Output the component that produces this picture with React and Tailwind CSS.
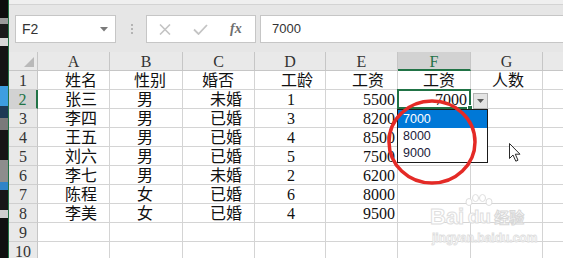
import React from "react";

const colW = ["w-[72px]", "w-[73px]", "w-[72px]", "w-[71px]", "w-[72px]", "w-[73px]", "w-[72px]"];
const letters = ["A", "B", "C", "D", "E", "F", "G"];
const headPad = ["pl-[27px]", "pl-[24px]", "pl-[19px]", "pl-[26px]", "pl-[26px]", "pl-[25px]", "pl-[21px]"];
const dataPad = ["pl-[27px]", "pl-[27px]", "text-right pr-[12px]", "pl-[32px]", "text-right pr-[2px]", "text-right pr-[3px]", ""];

const data = [
  ["张三", "男", "未婚", "1", "5500", "7000", ""],
  ["李四", "男", "已婚", "3", "8200", "", ""],
  ["王五", "男", "已婚", "4", "8500", "", ""],
  ["刘六", "男", "已婚", "5", "7500", "", ""],
  ["李七", "男", "未婚", "2", "6200", "", ""],
  ["陈程", "女", "已婚", "6", "8000", "", ""],
  ["李美", "女", "已婚", "4", "9500", "", ""],
  ["", "", "", "", "", "", ""],
  ["", "", "", "", "", "", ""],
];

const cellFont = "font-['Liberation_Serif','Noto_Sans_CJK_SC',serif] text-[16px] leading-[16px] text-[#111]";

function RowHeader({ n, active }) {
  return (
    <div
      className={
        "w-[29px] h-[19px] shrink-0 pt-[2px] text-center border-b border-[#cfcfcf] " +
        (active
          ? "bg-[#d2d2d2] text-[#217346] border-r-2 border-r-[#217346]"
          : "bg-[#e9e9e9] text-[#333] border-r border-r-[#c6c6c6]")
      }
    >
      {n}
    </div>
  );
}

function DataRow({ n, cells, pads }) {
  return (
    <div className={"flex h-[19px] " + cellFont}>
      <RowHeader n={n} active={n === 2} />
      {cells.map((c, i) => (
        <div
          key={i}
          className={colW[i] + " h-[19px] shrink-0 pt-[2px] border-r border-b border-[#d4d4d4] whitespace-nowrap overflow-hidden " + pads[i]}
        >
          {c}
        </div>
      ))}
      <div className="flex-1 h-[19px] border-b border-[#d4d4d4]" />
    </div>
  );
}

function LeftStrip() {
  return (
    <div className="w-[8px] h-full shrink-0 bg-[#111] flex flex-col">
      <div className="h-[18px] bg-[#0d0d0d]" />
      <div className="h-[6px] bg-[#9a9a9a]" />
      <div className="h-[14px] bg-[#1b1b1b]" />
      <div className="h-[8px] bg-[#d8d8d8]" />
      <div className="h-[40px] bg-[#141414]" />
      <div className="h-[20px] bg-[#3d9ee0]" />
      <div className="h-[12px] bg-[#1d3a55]" />
      <div className="h-[12px] bg-[#7a7a7a]" />
      <div className="h-[30px] bg-[#161616]" />
      <div className="h-[22px] bg-[#8d8d8d]" />
      <div className="h-[8px] bg-[#2f84c8]" />
      <div className="h-[20px] bg-[#181818]" />
      <div className="h-[8px] bg-[#cfcfcf]" />
      <div className="flex-1 bg-[#101010]" />
    </div>
  );
}

export default function App() {
  return (
    <div className="relative w-[563px] h-[258px] overflow-hidden bg-white flex">
      <LeftStrip />
      <div className="w-px h-full bg-[#217346] shrink-0" />
      <div className="flex-1 flex flex-col min-w-0">
        {/* toolbar */}
        <div className="h-[52px] shrink-0 bg-[#e6e6e6] flex flex-col">
          <div className="h-[5px] bg-[#efefef] border-b border-[#d3d3d3]" />
          <div className="flex items-start pt-[10px] pl-[6px]">
            <div className="w-[101px] h-[28px] bg-white border border-[#c6c6c6] flex items-center justify-between pl-[6px] pr-[7px] font-['Liberation_Sans',sans-serif] text-[14px] text-[#333]">
              <span>F2</span>
              <svg width="8" height="5" viewBox="0 0 8 5">
                <path d="M0 0 L8 0 L4 4.5 Z" fill="#7a7a7a" />
              </svg>
            </div>
            <div className="ml-[15px] mt-[9px] flex flex-col gap-[2px]">
              <div className="w-[2px] h-[2px] bg-[#b4b4b4]" />
              <div className="w-[2px] h-[2px] bg-[#b4b4b4]" />
              <div className="w-[2px] h-[2px] bg-[#b4b4b4]" />
            </div>
            <div className="ml-[13px] w-[110px] h-[28px] bg-white border border-[#c6c6c6] flex items-center">
              <svg className="ml-[12px]" width="12" height="11" viewBox="0 0 12 11">
                <path d="M1 0.5 L11 10.5 M11 0.5 L1 10.5" stroke="#c4c4c4" strokeWidth="1.6" />
              </svg>
              <svg className="ml-[22px]" width="15" height="11" viewBox="0 0 15 11">
                <path d="M1 5.5 L5.5 10 L14 1" stroke="#c4c4c4" strokeWidth="1.8" fill="none" />
              </svg>
              <span className="ml-[22px] font-['Liberation_Serif',serif] italic font-bold text-[14px] leading-[14px] text-[#6e6e6e]">fx</span>
            </div>
            <div className="ml-[4px] flex-1 h-[28px] bg-white border border-r-0 border-[#c6c6c6] flex items-center pl-[11px] font-['Liberation_Sans',sans-serif] text-[13px] text-[#333]">
              7000
            </div>
          </div>
        </div>
        {/* column header */}
        <div className={"flex h-[19px] shrink-0 " + cellFont}>
          <div className="w-[29px] h-[19px] shrink-0 bg-[#e9e9e9] border-r border-b border-[#c6c6c6] flex items-end justify-end pr-[3px] pb-[3px]">
            <svg width="10" height="10" viewBox="0 0 10 10">
              <path d="M10 0 L10 10 L0 10 Z" fill="#b9b9b9" />
            </svg>
          </div>
          {letters.map((l, i) => (
            <div
              key={l}
              className={
                colW[i] +
                " h-[19px] shrink-0 pt-[2px] text-center border-r border-r-[#c6c6c6] " +
                (l === "F"
                  ? "bg-[#d2d2d2] text-[#217346] border-b-2 border-b-[#217346]"
                  : "bg-[#e9e9e9] text-[#333] border-b border-b-[#c6c6c6]")
              }
            >
              {l}
            </div>
          ))}
          <div className="flex-1 h-[19px] bg-[#e9e9e9] border-b border-[#c6c6c6]" />
        </div>
        {/* rows */}
        <DataRow n={1} cells={["姓名", "性别", "婚否", "工龄", "工资", "工资", "人数"]} pads={headPad} />
        {data.map((r, i) => (
          <DataRow key={i} n={i + 2} cells={r} pads={dataPad} />
        ))}
      </div>

      {/* active cell border */}
      <div className="absolute left-[397px] top-[89px] w-[74px] h-[20px] border-2 border-[#217346]" />
      <div className="absolute left-[467px] top-[105px] w-[6px] h-[5px] bg-[#217346] border border-white" />

      {/* dropdown button */}
      <div className="absolute left-[473px] top-[93px] w-[15px] h-[16px] bg-[#e4e4e4] border border-[#b4b4b4] flex items-center justify-center">
        <svg width="7" height="4" viewBox="0 0 7 4">
          <path d="M0 0 L7 0 L3.5 4 Z" fill="#5a5a5a" />
        </svg>
      </div>

      {/* dropdown list */}
      <div className="absolute left-[397px] top-[109px] w-[91px] bg-white border border-[#1a1a1a] flex flex-col font-['Liberation_Sans',sans-serif] text-[12.5px]">
        <div className="h-[18px] bg-[#0078d7] text-white pl-[5px] leading-[18px]">7000</div>
        <div className="h-[17px] text-[#1b1b3a] pl-[5px] leading-[17px]">8000</div>
        <div className="h-[17px] text-[#1b1b3a] pl-[5px] leading-[16px]">9000</div>
      </div>

      {/* red circle annotation */}
      <svg className="absolute left-[386px] top-[98px]" width="92" height="88" viewBox="0 0 92 88">
        <ellipse cx="46" cy="44" rx="43" ry="41" fill="none" stroke="#e42a26" strokeWidth="3.5" />
      </svg>

      {/* mouse cursor */}
      <svg className="absolute left-[509px] top-[143px]" width="13" height="20" viewBox="0 0 13 20">
        <path d="M0.5 0.5 L0.5 15.5 L4 12 L6.8 18.2 L9 17.2 L6.3 11.2 L11 11.2 Z" fill="white" stroke="#2a2a2a" strokeWidth="1" strokeLinejoin="round" />
      </svg>

      {/* watermark */}
      <div className="absolute left-[430px] top-[194px] flex flex-col items-start pointer-events-none">
        <div className="flex items-end">
          <span className="font-['Liberation_Sans',sans-serif] font-bold text-[22px] leading-[22px] text-white [-webkit-text-stroke:1px_#dedede]">Bai</span>
          <div className="flex flex-col items-center">
            <svg width="30" height="12" viewBox="0 0 30 12">
              <ellipse cx="5" cy="8" rx="3" ry="3.5" fill="white" stroke="#dedede" />
              <ellipse cx="11.5" cy="4" rx="3" ry="3.5" fill="white" stroke="#dedede" />
              <ellipse cx="18.5" cy="4" rx="3" ry="3.5" fill="white" stroke="#dedede" />
              <ellipse cx="25" cy="8" rx="3" ry="3.5" fill="white" stroke="#dedede" />
            </svg>
            <span className="font-['Liberation_Sans',sans-serif] font-bold text-[19px] leading-[22px] text-white [-webkit-text-stroke:1px_#dedede] px-[2px]">du</span>
          </div>
          <span className="font-['Noto_Sans_CJK_SC',sans-serif] font-bold text-[15px] leading-[22px] text-white [-webkit-text-stroke:1px_#d8d8d8]">经验</span>
        </div>
        <span className="mt-[4px] ml-[2px] font-['Liberation_Sans',sans-serif] font-bold text-[12px] leading-[12px] text-white [-webkit-text-stroke:0.8px_#dedede]">jingyan.baidu.com</span>
      </div>
    </div>
  );
}
